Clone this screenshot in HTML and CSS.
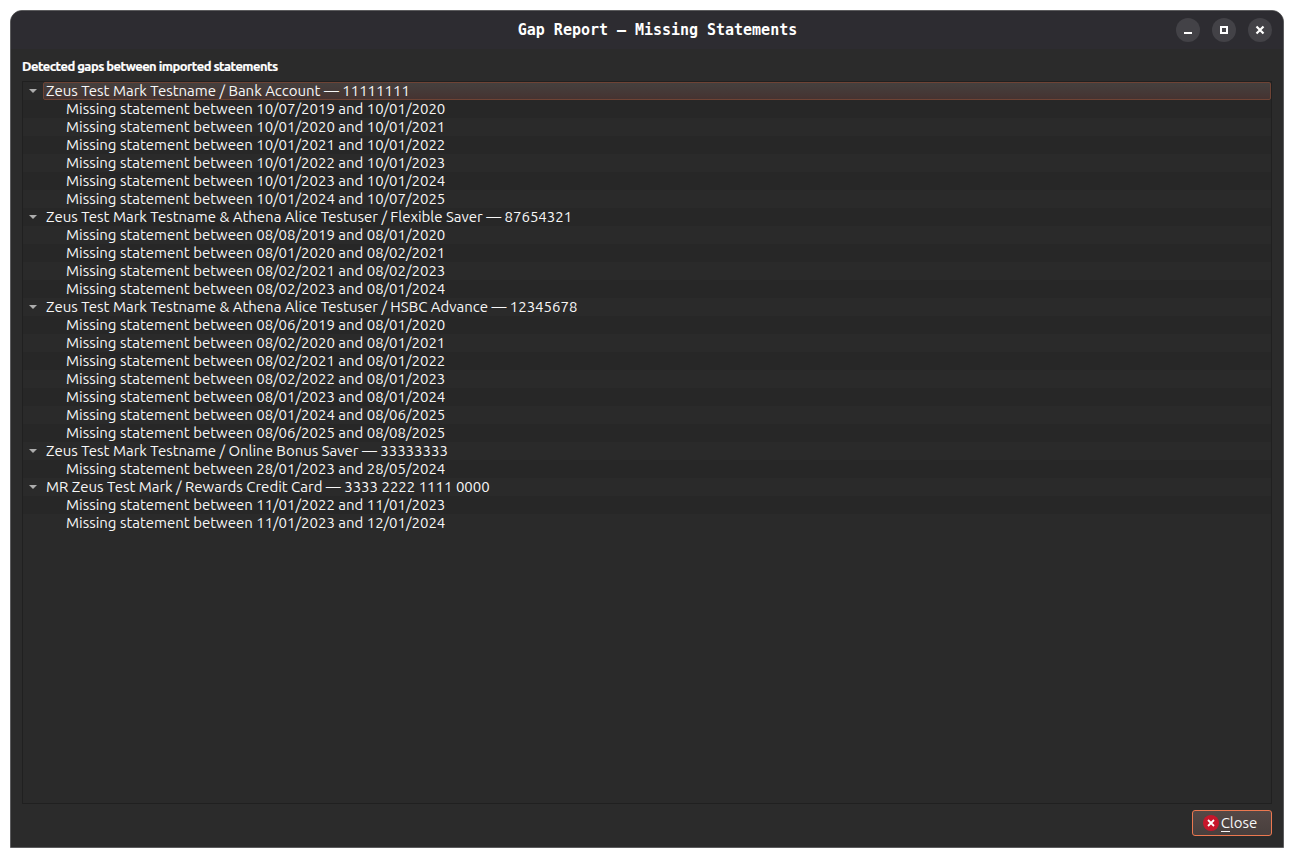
FILE: index.html
```html
<!DOCTYPE html>
<html lang="en">
<head>
    <meta charset="UTF-8">
    <meta name="viewport" content="width=device-width, initial-scale=1.0">
    <title>Gap Report — Missing Statements</title>
    <link rel="stylesheet" href="styles.css">
</head>
<body>

    <div class="window">
        <div class="titlebar">
            <h1>Gap Report — Missing Statements</h1>
            <div class="window-buttons">
                <button class="win-btn" aria-label="Minimize">
                    <svg width="24" height="24" viewBox="0 0 24 24"><path d="M8 15h8" stroke="#fff" stroke-width="2"/></svg>
                </button>
                <button class="win-btn" aria-label="Maximize">
                    <svg width="24" height="24" viewBox="0 0 24 24"><path d="M9 9h6v6h-6z" fill="none" stroke="#fff" stroke-width="2"/></svg>
                </button>
                <button class="win-btn" aria-label="Close window">
                    <svg width="24" height="24" viewBox="0 0 24 24"><path d="M8.5 8.5l7 7M15.5 8.5l-7 7" stroke="#fff" stroke-width="2.2"/></svg>
                </button>
            </div>
        </div>

        <div class="content">
            <h2>Detected gaps between imported statements</h2>

            <div class="tree">
                <div class="row account selected"><span class="arrow"></span><span class="label">Zeus Test Mark Testname / Bank Account — 11111111</span></div>
                <div class="row gap">Missing statement between 10/07/2019 and 10/01/2020</div>
                <div class="row gap">Missing statement between 10/01/2020 and 10/01/2021</div>
                <div class="row gap">Missing statement between 10/01/2021 and 10/01/2022</div>
                <div class="row gap">Missing statement between 10/01/2022 and 10/01/2023</div>
                <div class="row gap">Missing statement between 10/01/2023 and 10/01/2024</div>
                <div class="row gap">Missing statement between 10/01/2024 and 10/07/2025</div>

                <div class="row account"><span class="arrow"></span><span class="label">Zeus Test Mark Testname &amp; Athena Alice Testuser / Flexible Saver — 87654321</span></div>
                <div class="row gap">Missing statement between 08/08/2019 and 08/01/2020</div>
                <div class="row gap">Missing statement between 08/01/2020 and 08/02/2021</div>
                <div class="row gap">Missing statement between 08/02/2021 and 08/02/2023</div>
                <div class="row gap">Missing statement between 08/02/2023 and 08/01/2024</div>

                <div class="row account"><span class="arrow"></span><span class="label">Zeus Test Mark Testname &amp; Athena Alice Testuser / HSBC Advance — 12345678</span></div>
                <div class="row gap">Missing statement between 08/06/2019 and 08/01/2020</div>
                <div class="row gap">Missing statement between 08/02/2020 and 08/01/2021</div>
                <div class="row gap">Missing statement between 08/02/2021 and 08/01/2022</div>
                <div class="row gap">Missing statement between 08/02/2022 and 08/01/2023</div>
                <div class="row gap">Missing statement between 08/01/2023 and 08/01/2024</div>
                <div class="row gap">Missing statement between 08/01/2024 and 08/06/2025</div>
                <div class="row gap">Missing statement between 08/06/2025 and 08/08/2025</div>

                <div class="row account"><span class="arrow"></span><span class="label">Zeus Test Mark Testname / Online Bonus Saver — 33333333</span></div>
                <div class="row gap">Missing statement between 28/01/2023 and 28/05/2024</div>

                <div class="row account"><span class="arrow"></span><span class="label">MR Zeus Test Mark / Rewards Credit Card — 3333 2222 1111 0000</span></div>
                <div class="row gap">Missing statement between 11/01/2022 and 11/01/2023</div>
                <div class="row gap">Missing statement between 11/01/2023 and 12/01/2024</div>
            </div>

            <div class="footer">
                <button class="close-btn">
                    <svg width="16" height="16" viewBox="0 0 16 16"><circle cx="8" cy="8" r="8" fill="#c7162b"/><path d="M5 5l6 6M11 5l-6 6" stroke="#fff" stroke-width="1.8"/></svg>
                    <span><span class="mnemonic">C</span>lose</span>
                </button>
            </div>
        </div>
    </div>

</body>
</html>
```
FILE: styles.css
```css
* {
    box-sizing: border-box;
}
body {
    margin: 0;
    padding: 10px;
    height: 858px;
    background-color: #fff;
    font-family: Ubuntu, "Noto Sans", sans-serif;
    color: #f7f7f7;
    overflow: hidden;
}
.window {
    display: flex;
    flex-direction: column;
    height: 838px;
    background-color: #2b2b2b;
    border: 1px solid #5c5c5e;
    border-radius: 12px 12px 0 0;
    overflow: hidden;
}
.titlebar {
    display: grid;
    grid-template-columns: 1fr auto 1fr;
    align-items: center;
    height: 38px;
    padding-left: 21px;
    background-color: #2d2c31;
}
.titlebar h1 {
    grid-column: 2;
    margin: 0;
    font-family: "DejaVu Sans Mono", monospace;
    font-size: 15px;
    font-weight: bold;
    line-height: 20px;
    letter-spacing: -0.02px;
    color: #fff;
}
.window-buttons {
    display: flex;
    justify-content: flex-end;
    gap: 12px;
    padding-right: 11px;
}
.win-btn {
    width: 24px;
    height: 24px;
    padding: 0;
    border: none;
    border-radius: 50%;
    background-color: #434247;
}
.win-btn svg {
    display: block;
}
.content {
    display: flex;
    flex-direction: column;
    flex: 1;
    padding: 8px 11px 11px;
}
.content h2 {
    margin: 0 0 6px;
    font-size: 13px;
    font-weight: bold;
    line-height: 18px;
    letter-spacing: -0.53px;
    white-space: nowrap;
    color: #fff;
    -webkit-text-stroke: 0.2px #fff;
}
.tree {
    height: 723px;
    border: 1px solid #202020;
    background-color: #2a2a2a;
}
.row {
    display: flex;
    height: 18px;
    font-size: 15px;
    line-height: 18px;
    letter-spacing: -0.01px;
    white-space: nowrap;
}
.row:nth-child(even) {
    background-color: #272727;
}
.gap {
    padding-left: 43px;
}
.arrow {
    width: 8px;
    height: 4px;
    margin: 7px 6px 0 6px;
    background-color: #adadad;
    clip-path: polygon(0 0, 100% 0, 50% 100%);
}
.label {
    flex: 1;
    padding-left: 3px;
}
.selected .label {
    border: 1px solid #6e4335;
    border-radius: 2px;
    padding-left: 2px;
    line-height: 16px;
    background: linear-gradient(#45403e, #453331);
}
.footer {
    display: flex;
    justify-content: flex-end;
    margin-top: 6px;
}
.close-btn {
    display: flex;
    align-items: center;
    justify-content: center;
    gap: 2px;
    width: 80px;
    height: 26px;
    padding: 0 4px 0 0;
    border: 1px solid #ec7850;
    border-radius: 3px;
    background: linear-gradient(#544846, #483f3d);
    color: #f7f7f7;
    font-family: inherit;
    font-size: 15px;
    line-height: 18px;
}
.mnemonic {
    border-bottom: 1px solid #f7f7f7;
}
```
